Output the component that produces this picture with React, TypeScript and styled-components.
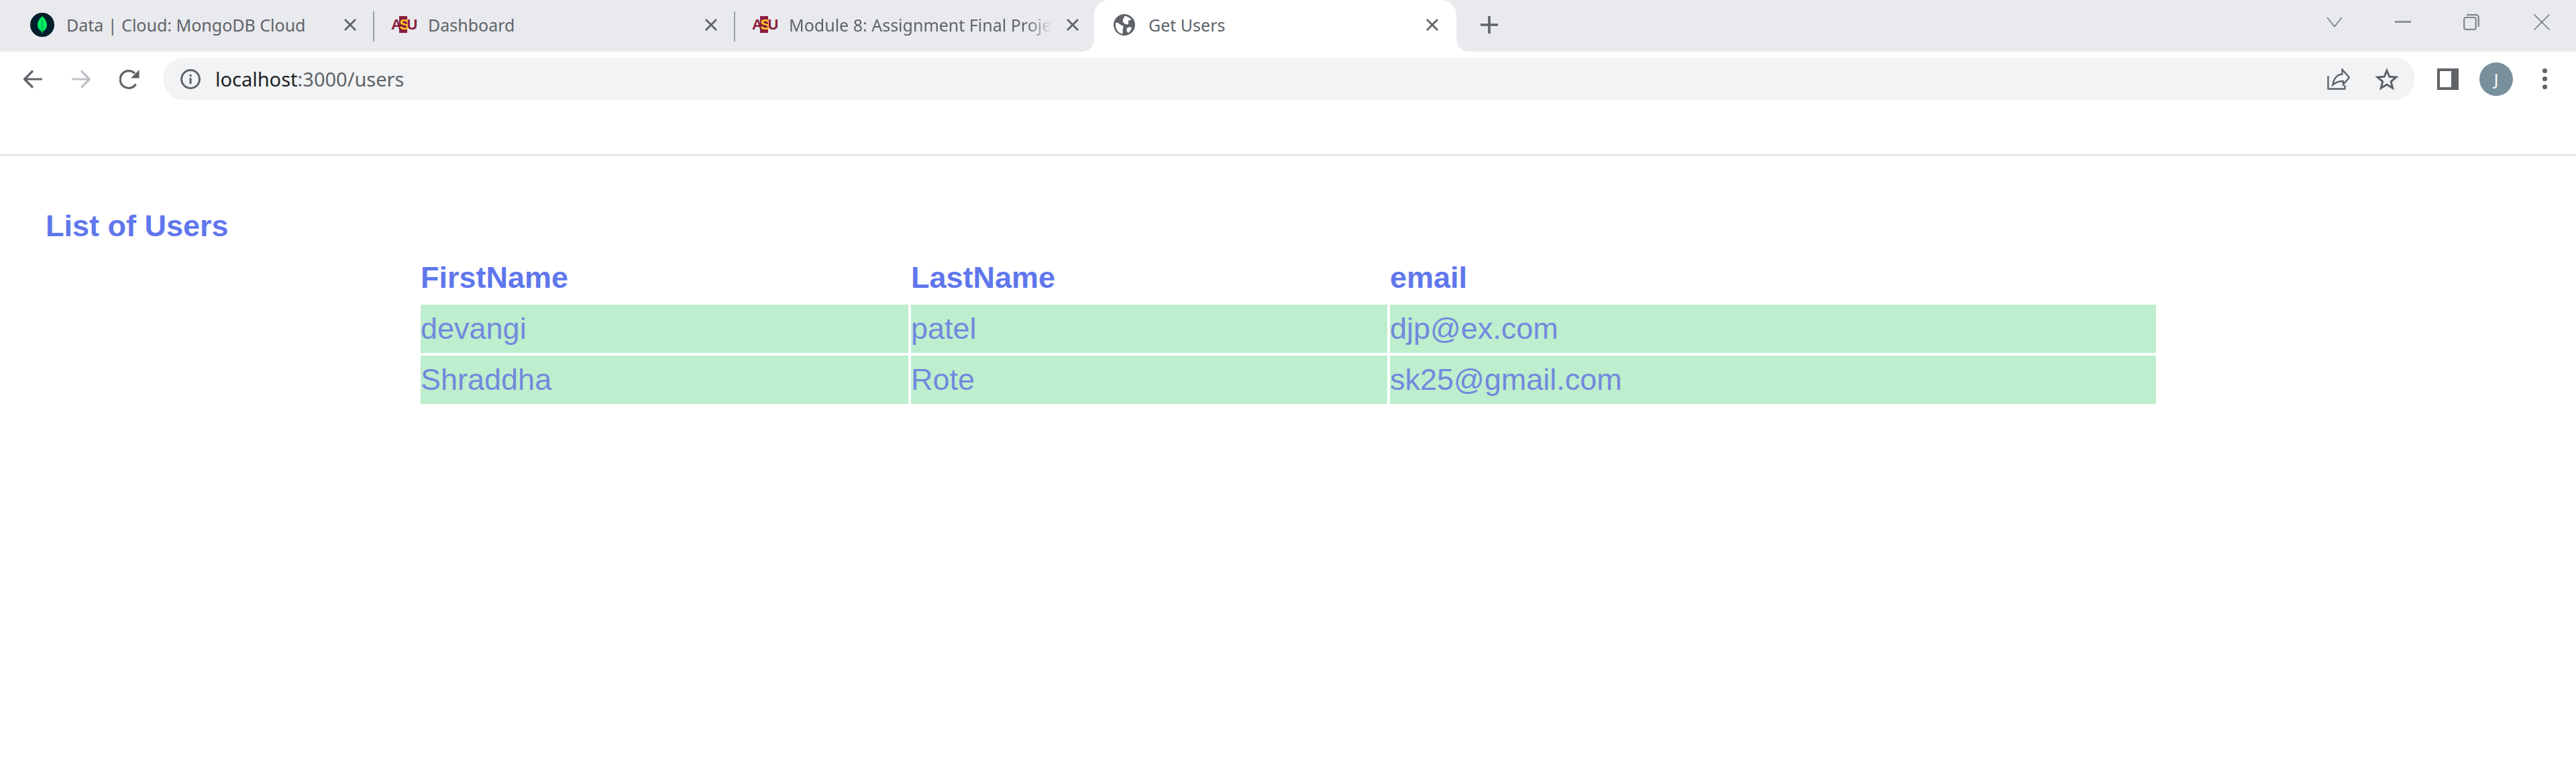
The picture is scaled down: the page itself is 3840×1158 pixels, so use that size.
import styled, { createGlobalStyle } from "styled-components";

const users = [
  { first: "devangi", last: "patel", email: "djp@ex.com" },
  { first: "Shraddha", last: "Rote", email: "sk25@gmail.com" },
];

function LeafIcon() {
  return (
    <svg width="36" height="36" viewBox="0 0 36 36">
      <circle cx="18" cy="18" r="18" fill="#001e2b" />
      <path d="M18 5c4 4 7 8 7 13 0 5-3 8-6 10l-1 4-1-4c-3-2-6-5-6-10 0-5 3-9 7-13z" fill="#00ed64" />
      <path d="M18 10v20" stroke="#00a84a" strokeWidth="1.4" />
    </svg>
  );
}

function GlobeIcon() {
  return (
    <svg width="32" height="32" viewBox="0 0 32 32">
      <circle cx="16" cy="16" r="16" fill="#5f6368" />
      <path d="M3 13c3-1 5 1 7 2.500s4 1.500 4.500 3.500-1.500 3-1 5 .5 4-.5 5.500C7 28 2 22.500 3 13z" fill="#fff" />
      <path d="M16 3c4 0 8 2 10.500 5-1.500 1-3.500 1-4.500 2.500s1 2.500 0 4-4 1-6-.5-3-3.500-2-6 2-3 2-5z" fill="#fff" />
      <path d="M21 20c2-1 4-1 6 0-.5 3-2.500 6-5 8-1.500-1-2.500-2.500-2.500-4.500 0-1.500.5-2.800 1.500-3.500z" fill="#fff" />
    </svg>
  );
}

function BackIcon({ color }: { color: string }) {
  return (
    <svg width="30" height="30" viewBox="0 0 30 30" fill="none" stroke={color} strokeWidth="3.2" strokeLinecap="round" strokeLinejoin="round">
      <path d="M27.500 15H3M14 3.500 2.500 15 14 26.500" />
    </svg>
  );
}

function ForwardIcon({ color }: { color: string }) {
  return (
    <svg width="30" height="30" viewBox="0 0 30 30" fill="none" stroke={color} strokeWidth="3.2" strokeLinecap="round" strokeLinejoin="round">
      <path d="M2.500 15H27M16 3.500 27.500 15 16 26.500" />
    </svg>
  );
}

function ReloadIcon() {
  return (
    <svg width="30" height="30" viewBox="0 0 30 30" fill="none">
      <path d="M24.500 22.500A12.800 12.800 0 1 1 23 6.500" stroke="#5f6368" strokeWidth="3.200" />
      <path d="M29.500 1v12.500H17z" fill="#5f6368" />
    </svg>
  );
}

function InfoIcon() {
  return (
    <svg width="30" height="30" viewBox="0 0 30 30" fill="none">
      <circle cx="15" cy="15" r="13.400" stroke="#5f6368" strokeWidth="3" />
      <rect x="13.500" y="13" width="3" height="9" fill="#5f6368" />
      <rect x="13.500" y="8" width="3" height="3" fill="#5f6368" />
    </svg>
  );
}

function ShareIcon() {
  return (
    <svg width="34" height="32" viewBox="0 0 34 32" fill="none" stroke="#5f6368" strokeWidth="2.400">
      <path d="M1.500 11v19.500h25V25" />
      <path d="M22.500 1.500 33 13.500 24 24v-5c-6 0-11 1-15.500 5.500C9.500 15.500 15 9 22.500 8.500z" strokeLinejoin="miter" />
    </svg>
  );
}

function StarIcon() {
  return (
    <svg width="34" height="33" viewBox="0 0 34 33" fill="none" stroke="#5f6368" strokeWidth="3">
      <path d="m17 4 3.800 9.300 10.200.7-7.800 6.500 2.500 9.800L17 25l-8.700 5.300 2.500-9.800L3 14l10.200-.7z" />
    </svg>
  );
}

function ChevronIcon() {
  return (
    <svg width="24" height="16" viewBox="0 0 24 16" fill="none" stroke="#80868b" strokeWidth="1.800">
      <path d="m1 1 11 13.500L23 1" />
    </svg>
  );
}

function MinimizeIcon() {
  return (
    <svg width="24" height="4" viewBox="0 0 24 4">
      <rect width="24" height="3" fill="#8e9297" />
    </svg>
  );
}

function RestoreIcon() {
  return (
    <svg width="24" height="24" viewBox="0 0 24 24" fill="none" stroke="#80868b" strokeWidth="2.200">
      <rect x="1.200" y="5" width="17.500" height="17.800" rx="2.500" />
      <path d="M5 1.200h14a3.800 3.800 0 0 1 3.800 3.800v14" />
    </svg>
  );
}

function WindowCloseIcon() {
  return (
    <svg width="24" height="24" viewBox="0 0 24 24" fill="none" stroke="#80868b" strokeWidth="1.800">
      <path d="m.6.6 22.800 22.800M23.400.6.6 23.400" />
    </svg>
  );
}

function CloseIcon() {
  return (
    <svg width="20" height="18" viewBox="0 0 20 18" fill="none" stroke="#5f6368" strokeWidth="2.800">
      <path d="m2 1 16 16M18 1 2 17" />
    </svg>
  );
}

function PlusIcon() {
  return (
    <svg width="28" height="28" viewBox="0 0 28 28" fill="none" stroke="#5f6368" strokeWidth="3.600">
      <path d="M14 1v26M1 14h26" />
    </svg>
  );
}

function App() {
  return (
    <Page>
      <GlobalStyle />
      <BrowserFrame>
        <TabStrip>
          <Tab $width={556} $pad={45} $padRight={22}>
            <LeafIcon />
            <TabTitle>Data | Cloud: MongoDB Cloud</TabTitle>
            <CloseSlot>
              <CloseIcon />
            </CloseSlot>
          </Tab>
          <TabDivider />
          <Tab $width={536} $pad={25} $padRight={22}>
            <AsuLogo>
              A<AsuSun>S</AsuSun>U
            </AsuLogo>
            <TabTitle>Dashboard</TabTitle>
            <CloseSlot>
              <CloseIcon />
            </CloseSlot>
          </Tab>
          <TabDivider />
          <Tab $width={535} $pad={25} $padRight={20}>
            <AsuLogo>
              A<AsuSun>S</AsuSun>U
            </AsuLogo>
            <TabTitle $faded>Module 8: Assignment Final Project</TabTitle>
            <CloseSlot>
              <CloseIcon />
            </CloseSlot>
          </Tab>
          <ActiveTab>
            <GlobeIcon />
            <TabTitle>Get Users</TabTitle>
            <CloseSlot>
              <CloseIcon />
            </CloseSlot>
          </ActiveTab>
          <NewTabButton>
            <PlusIcon />
          </NewTabButton>
          <WindowControls>
            <WindowButton>
              <ChevronIcon />
            </WindowButton>
            <WindowButton>
              <MinimizeIcon />
            </WindowButton>
            <WindowButton>
              <RestoreIcon />
            </WindowButton>
            <WindowButton>
              <WindowCloseIcon />
            </WindowButton>
          </WindowControls>
        </TabStrip>
        <Toolbar>
          <ToolButton>
            <BackIcon color="#5f6368" />
          </ToolButton>
          <ToolButton>
            <ForwardIcon color="#bdc1c6" />
          </ToolButton>
          <ToolButton>
            <ReloadIcon />
          </ToolButton>
          <AddressBar>
            <InfoIcon />
            <UrlText>
              localhost<UrlPath>:3000/users</UrlPath>
            </UrlText>
            <AddressActions>
              <ShareIcon />
              <StarIcon />
            </AddressActions>
          </AddressBar>
          <RightTools>
            <ToolButton>
              <SidePanelIcon />
            </ToolButton>
            <ToolButton>
              <Avatar>J</Avatar>
            </ToolButton>
            <ToolButton>
              <MenuDots>
                <i />
                <i />
                <i />
              </MenuDots>
            </ToolButton>
          </RightTools>
        </Toolbar>
      </BrowserFrame>
      <Content>
        <Title>List of Users</Title>
        <UserTable>
          <colgroup>
            <col width="727" />
            <col width="710" />
            <col width="1142" />
          </colgroup>
          <thead>
            <tr>
              <HeadCell>FirstName</HeadCell>
              <HeadCell>LastName</HeadCell>
              <HeadCell>email</HeadCell>
            </tr>
          </thead>
          <tbody>
            {users.map((user) => (
              <tr key={user.email}>
                <BodyCell>{user.first}</BodyCell>
                <BodyCell>{user.last}</BodyCell>
                <BodyCell>{user.email}</BodyCell>
              </tr>
            ))}
          </tbody>
        </UserTable>
      </Content>
    </Page>
  );
}

const GlobalStyle = createGlobalStyle`
  html, body {
    margin: 0;
    padding: 0;
    background: #ffffff;
  }
`;

const Page = styled.div`
  width: 3840px;
  height: 1158px;
  overflow: hidden;
  font-family: "Liberation Sans", Arial, sans-serif;
`;

const BrowserFrame = styled.header`
  height: 232px;
  box-sizing: border-box;
  border-bottom: 2px solid #dcdcdc;
`;

const TabStrip = styled.div`
  display: flex;
  height: 77px;
  background: #e8eaed;
`;

const Tab = styled.div<{ $width: number; $pad: number; $padRight: number }>`
  display: flex;
  align-items: center;
  flex: none;
  box-sizing: border-box;
  width: ${(p) => p.$width}px;
  padding: 0 ${(p) => p.$padRight}px 3px ${(p) => p.$pad}px;
  gap: 18px;
`;

const ActiveTab = styled.div`
  position: relative;
  display: flex;
  align-items: center;
  flex: none;
  box-sizing: border-box;
  width: 540px;
  padding: 0 24px 3px 29px;
  gap: 20px;
  background: #ffffff;
  border-radius: 22px 22px 0 0;

  &::before,
  &::after {
    content: "";
    position: absolute;
    bottom: 0;
    width: 18px;
    height: 18px;
  }

  &::before {
    left: -18px;
    background: radial-gradient(circle at 0 0, #e8eaed 17.5px, #ffffff 18px);
  }

  &::after {
    right: -18px;
    background: radial-gradient(circle at 100% 0, #e8eaed 17.5px, #ffffff 18px);
  }
`;

const TabTitle = styled.span<{ $faded?: boolean }>`
  flex: 1;
  min-width: 0;
  overflow: hidden;
  white-space: nowrap;
  font-family: "Noto Sans", "Open Sans", sans-serif;
  font-size: 25px;
  line-height: 34px;
  color: #5f6368;
  ${(p) =>
    p.$faded &&
    "mask-image: linear-gradient(to right, #000 90%, transparent 100%);"}
`;

const CloseSlot = styled.span`
  display: flex;
  flex: none;
  justify-content: center;
  align-items: center;
  width: 24px;
`;

const TabDivider = styled.span`
  flex: none;
  align-self: flex-start;
  width: 2px;
  height: 45px;
  margin-top: 17px;
  background: #9aa0a6;
`;

const AsuLogo = styled.span`
  display: block;
  flex: none;
  width: 37px;
  white-space: nowrap;
  font-family: "Liberation Sans", sans-serif;
  font-size: 22px;
  font-weight: 700;
  line-height: 28px;
  letter-spacing: -3.500px;
  color: #8c1d40;
`;

const AsuSun = styled.span`
  color: #ffc627;
  background: #8c1d40;
`;

const NewTabButton = styled.div`
  display: flex;
  flex: none;
  justify-content: center;
  align-items: center;
  width: 44px;
  margin-left: 27px;
  padding-bottom: 3px;
`;

const WindowControls = styled.div`
  display: flex;
  margin-left: auto;
  height: 66px;
`;

const WindowButton = styled.div`
  display: flex;
  justify-content: center;
  align-items: center;
  width: 102px;

  &:last-child {
    margin-left: 3px;
  }
`;

const Toolbar = styled.div`
  display: flex;
  align-items: center;
  height: 63px;
  padding: 9px 0 0 13px;
`;

const ToolButton = styled.div`
  display: flex;
  flex: none;
  justify-content: center;
  align-items: center;
  width: 72px;
  height: 63px;
`;

const AddressBar = styled.div`
  display: flex;
  flex: none;
  align-items: center;
  box-sizing: border-box;
  width: 3357px;
  height: 63px;
  margin-left: 14px;
  padding: 0 25px 0 26px;
  gap: 22px;
  background: #f1f3f4;
  border-radius: 32px;
`;

const UrlText = styled.span`
  font-family: "Noto Sans", "Open Sans", sans-serif;
  font-size: 29px;
  color: #202124;
`;

const UrlPath = styled.span`
  color: #5f6368;
`;

const AddressActions = styled.div`
  display: flex;
  align-items: center;
  margin-left: auto;
  gap: 38px;
`;

const RightTools = styled.div`
  display: flex;
  margin-left: 13px;
`;

const SidePanelIcon = styled.span`
  display: block;
  box-sizing: border-box;
  width: 32px;
  height: 32px;
  border: solid #5f6368;
  border-width: 4px 11px 4px 4px;
`;

const Avatar = styled.span`
  display: flex;
  justify-content: center;
  align-items: center;
  width: 50px;
  height: 50px;
  border-radius: 50%;
  background: #78909c;
  color: #ffffff;
  font-family: "Noto Sans", sans-serif;
  font-size: 24px;
`;

const MenuDots = styled.span`
  display: flex;
  flex-direction: column;
  gap: 5px;

  i {
    display: block;
    width: 7px;
    height: 7px;
    border-radius: 50%;
    background: #5f6368;
  }
`;

const Content = styled.main`
  padding-top: 78px;
`;

const Title = styled.h2`
  margin: 0 0 10px 68px;
  font-size: 45px;
  font-weight: 700;
  line-height: 54px;
  color: #5f77ec;
`;

const UserTable = styled.table`
  table-layout: fixed;
  width: 2595px;
  margin-left: 623px;
  border-collapse: separate;
  border-spacing: 4px;
`;

const HeadCell = styled.th`
  height: 72px;
  padding: 0;
  text-align: left;
  font-size: 45px;
  font-weight: 700;
  color: #5f77ec;
`;

const BodyCell = styled.td`
  height: 72px;
  padding: 0;
  font-size: 45px;
  background: #bdeecd;
  color: #7189dd;
`;

export default App;
